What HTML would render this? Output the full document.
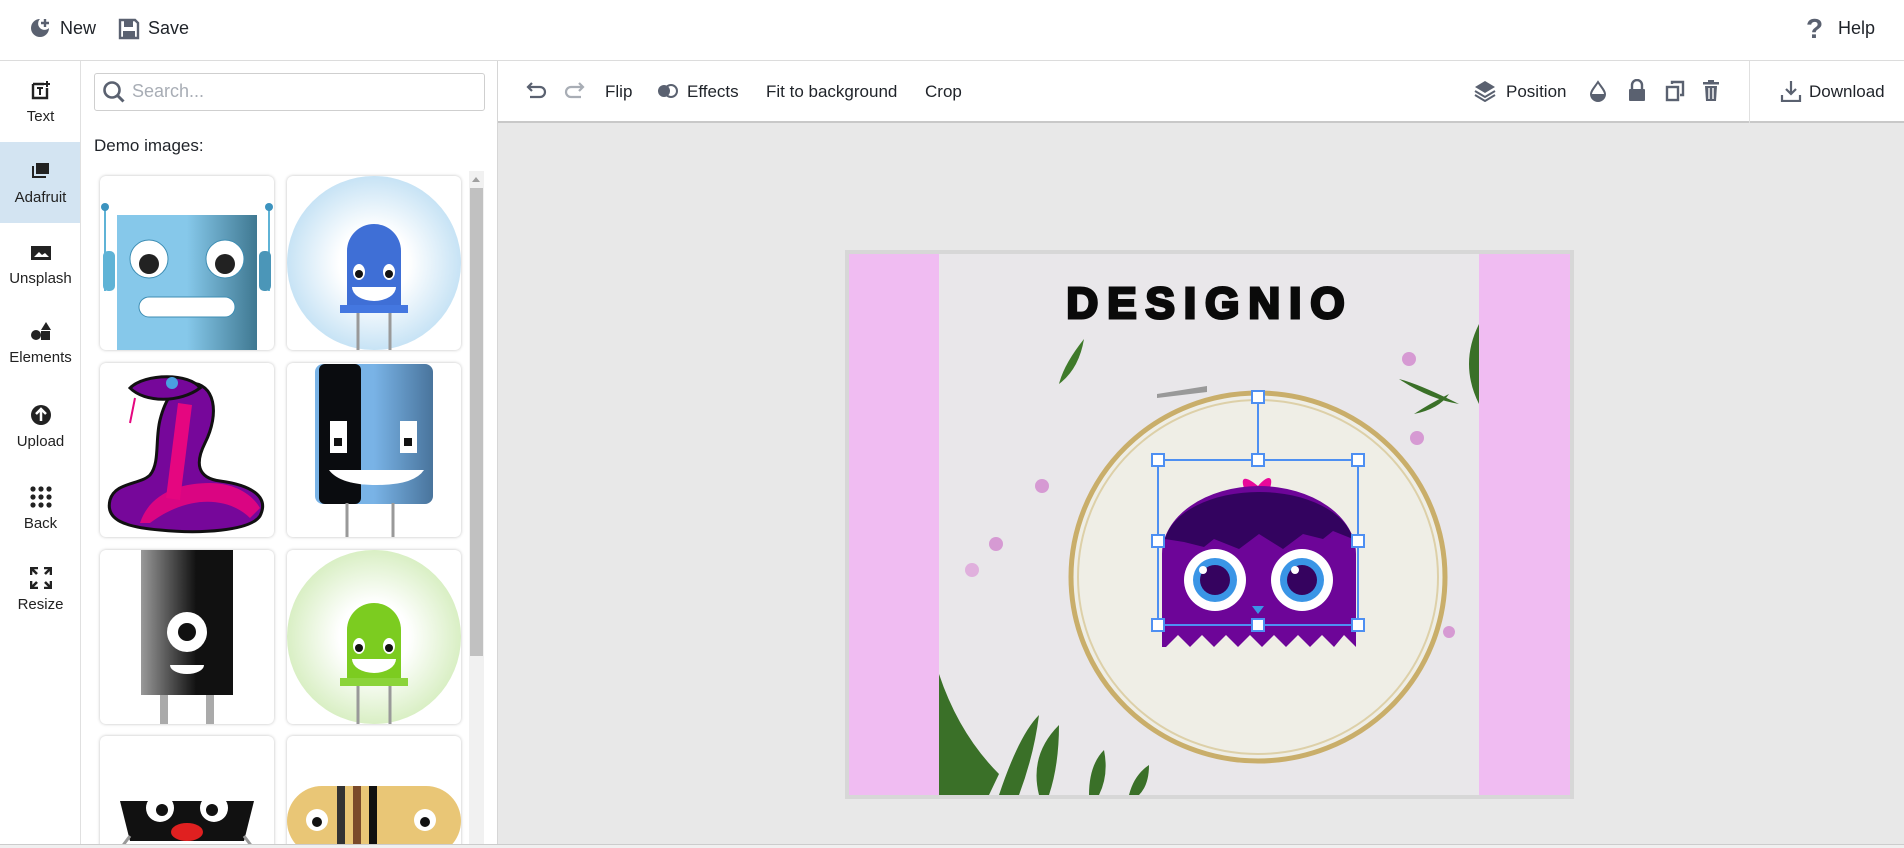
<!DOCTYPE html>
<html><head><meta charset="utf-8"><style>
*{box-sizing:border-box;margin:0;padding:0}
html,body{width:1904px;height:848px;overflow:hidden}
body{background:#fff;font-family:"Liberation Sans",sans-serif;color:#1f2329;position:relative}
.abs{position:absolute}
.top{left:0;top:0;width:1904px;height:61px;border-bottom:1px solid #dcdcdc;background:#fff}
.tt{font-size:18px;top:18px}
.side{left:0;top:61px;width:81px;height:787px;background:#fff;border-right:1px solid #e0e0e0}
.si{width:81px;text-align:center;font-size:15px;color:#222}
.panel{left:81px;top:61px;width:417px;height:787px;background:#fff;border-right:1px solid #d6d6d6}
.clip{left:81px;top:165px;width:385px;height:679px;overflow:hidden}
.card{width:174px;height:174px;background:#fff;border-radius:6px;box-shadow:0 0 3px rgba(0,0,0,.25);overflow:hidden}
.tb{left:498px;top:61px;width:1406px;height:62px;background:#fff;border-bottom:2px solid #c8c8c8}
.tl{font-size:17px;top:82px;color:#1f2329}
.ws{left:498px;top:123px;width:1406px;height:721px;background:#e8e8e8}
</style></head><body>
<div class="abs top"></div>
<svg class="abs" style="left:29px;top:17px" width="22" height="22" viewBox="0 0 22 22"><path d="M11 2A9 9 0 1 0 20 11 6 6 0 0 1 11 2Z" fill="#5a6170"/><path d="M16 2v8M12 6h8" stroke="#5a6170" stroke-width="2.4"/></svg>
<div class="abs tt" style="left:60px">New</div>
<svg class="abs" style="left:118px;top:18px" width="22" height="22" viewBox="0 0 22 22"><path d="M2 2h15l3 3v15H2Z" fill="none" stroke="#5a6170" stroke-width="2.4"/><rect x="6" y="3" width="9" height="6" fill="#5a6170"/><rect x="5" y="13" width="12" height="6" fill="#5a6170"/></svg>
<div class="abs tt" style="left:148px">Save</div>
<div class="abs" style="left:1806px;top:13px;font-size:28px;font-weight:bold;color:#5a6170">?</div>
<div class="abs tt" style="left:1838px">Help</div>

<div class="abs side"></div>
<div class="abs" style="left:0;top:142px;width:80px;height:81px;background:#d3e4f2"></div>
<div class="abs si" style="top:80px"><svg width="20" height="20" viewBox="0 0 20 20"><path d="M2 4h11M2 4v14h14V8" fill="none" stroke="#222" stroke-width="2.4"/><path d="M6 8h6M9 8v7M16 1v6M13 4h6" stroke="#222" stroke-width="2"/></svg><div style="margin-top:4px">Text</div></div>
<div class="abs si" style="top:161px"><svg width="20" height="18" viewBox="0 0 20 18"><rect x="5" y="2" width="13" height="11" fill="#222"/><path d="M2 5v11h13" fill="none" stroke="#222" stroke-width="2"/></svg><div style="margin-top:6px">Adafruit</div></div>
<div class="abs si" style="top:244px"><svg width="22" height="18" viewBox="0 0 22 18"><rect x="1" y="2" width="20" height="14" fill="#222"/><path d="M4 13l5-5 3 3 3-2 4 4Z" fill="#fff"/></svg><div style="margin-top:4px">Unsplash</div></div>
<div class="abs si" style="top:321px"><svg width="22" height="20" viewBox="0 0 22 20"><circle cx="6" cy="14" r="5" fill="#222"/><rect x="11" y="10" width="9" height="9" fill="#222"/><path d="M16 1l5 8h-10Z" fill="#222"/></svg><div style="margin-top:4px">Elements</div></div>
<div class="abs si" style="top:404px"><svg width="22" height="22" viewBox="0 0 22 22"><circle cx="11" cy="11" r="10" fill="#222"/><path d="M11 17V6M6 10l5-5 5 5" fill="none" stroke="#fff" stroke-width="2.5"/></svg><div style="margin-top:3px">Upload</div></div>
<div class="abs si" style="top:486px"><svg width="22" height="22" viewBox="0 0 22 22" fill="#222"><circle cx="3" cy="3" r="2.6"/><circle cx="11" cy="3" r="2.6"/><circle cx="19" cy="3" r="2.6"/><circle cx="3" cy="11" r="2.6"/><circle cx="11" cy="11" r="2.6"/><circle cx="19" cy="11" r="2.6"/><circle cx="3" cy="19" r="2.6"/><circle cx="11" cy="19" r="2.6"/><circle cx="19" cy="19" r="2.6"/></svg><div style="margin-top:3px">Back</div></div>
<div class="abs si" style="top:567px"><svg width="22" height="22" viewBox="0 0 22 22" fill="none" stroke="#222" stroke-width="2.6"><path d="M1 8V1h7M1 1l6 6M21 8V1h-7M21 1l-6 6M1 14v7h7M1 21l6-6M21 14v7h-7M21 21l-6-6"/></svg><div style="margin-top:3px">Resize</div></div>

<div class="abs panel"></div>
<div class="abs" style="left:94px;top:73px;width:391px;height:38px;border:1px solid #cfcfcf;border-radius:3px"></div>
<svg class="abs" style="left:102px;top:80px" width="24" height="24" viewBox="0 0 24 24"><circle cx="10" cy="10" r="7.5" fill="none" stroke="#5a6170" stroke-width="2.6"/><path d="M15.5 15.5l6 6" stroke="#5a6170" stroke-width="3"/></svg>
<div class="abs" style="left:132px;top:81px;font-size:18px;color:#a8adb5">Search...</div>
<div class="abs" style="left:94px;top:136px;font-size:17px">Demo images:</div>
<div class="abs" style="left:469px;top:171px;width:15px;height:673px;background:#f1f1f1"></div>
<div class="abs" style="left:470px;top:188px;width:13px;height:468px;background:#c1c1c1"></div>
<div class="abs" style="left:472px;top:177px;width:0;height:0;border:4px solid transparent;border-bottom:5px solid #a0a0a0;border-top:0"></div>

<div class="abs clip">
<div class="abs card" style="left:19px;top:11px"><svg width="174" height="174"><defs><linearGradient id="g1"><stop offset=".5" stop-color="#86c8ea"/><stop offset="1" stop-color="#3f7891"/></linearGradient></defs><line x1="5" y1="31" x2="5" y2="115" stroke="#5fb3d6" stroke-width="2"/><line x1="169" y1="31" x2="169" y2="115" stroke="#5fb3d6" stroke-width="2"/><circle cx="5" cy="31" r="4" fill="#3c93bf"/><circle cx="169" cy="31" r="4" fill="#3c93bf"/><rect x="3" y="75" width="12" height="40" rx="5" fill="#5fb3d6"/><rect x="159" y="75" width="12" height="40" rx="5" fill="#4b96b8"/><rect x="17" y="39" width="140" height="146" fill="url(#g1)"/><circle cx="49" cy="83" r="19" fill="#fff" stroke="#3d8db3"/><circle cx="49" cy="88" r="10" fill="#222"/><circle cx="125" cy="83" r="19" fill="#fff" stroke="#3d8db3"/><circle cx="125" cy="88" r="10" fill="#222"/><rect x="39" y="121" width="96" height="20" rx="10" fill="#fff" stroke="#3d8db3"/></svg></div>
<div class="abs card" style="left:206px;top:11px"><svg width="174" height="174"><defs><radialGradient id="g2"><stop offset=".4" stop-color="#fff"/><stop offset="1" stop-color="#c7e3f5"/></radialGradient></defs><circle cx="87" cy="87" r="87" fill="url(#g2)"/><path d="M60 75a27 27 0 0 1 54 0v60H60Z" fill="#3f6fd6"/><rect x="53" y="129" width="68" height="8" fill="#4477e0"/><line x1="71" y1="137" x2="71" y2="174" stroke="#999" stroke-width="3"/><line x1="103" y1="137" x2="103" y2="174" stroke="#999" stroke-width="3"/><ellipse cx="72" cy="96" rx="6" ry="8" fill="#fff"/><ellipse cx="102" cy="96" rx="6" ry="8" fill="#fff"/><circle cx="72" cy="98" r="4" fill="#111"/><circle cx="102" cy="98" r="4" fill="#111"/><path d="M65 111h44a22 14 0 0 1-44 0Z" fill="#fff"/></svg></div>
<div class="abs card" style="left:19px;top:198px"><svg width="174" height="174"><path d="M90 20c25 0 30 30 15 60-10 20-8 35 15 38 30 4 50 15 40 35-10 15-60 18-100 14-35-3-55-10-50-30 5-18 30-15 40-25 10-12 5-35 10-55 5-20 15-37 30-37Z" fill="#76079a" stroke="#111" stroke-width="3"/><path d="M40 160c10-30 40-40 70-40 20 0 40 8 50 25l-10 10c-20-20-60-25-100 5Z" fill="#e50680" opacity=".9"/><path d="M78 40l-12 95 14 2 12-95Z" fill="#e50680"/><path d="M30 25c15-15 60-15 70 0-20 15-55 15-70 0Z" fill="#76079a" stroke="#111" stroke-width="3"/><circle cx="72" cy="20" r="6" fill="#4aa0e0"/><path d="M35 35l-5 25" stroke="#e50680" stroke-width="2"/></svg></div>
<div class="abs card" style="left:206px;top:198px"><svg width="174" height="174"><defs><linearGradient id="g3"><stop offset=".5" stop-color="#79b3e6"/><stop offset="1" stop-color="#49749c"/></linearGradient></defs><rect x="28" y="1" width="118" height="140" rx="8" fill="url(#g3)"/><rect x="32" y="1" width="42" height="140" rx="6" fill="#0a0c0f"/><line x1="60" y1="140" x2="60" y2="174" stroke="#999" stroke-width="3"/><line x1="106" y1="140" x2="106" y2="174" stroke="#999" stroke-width="3"/><rect x="43" y="58" width="17" height="32" fill="#fff"/><rect x="47" y="75" width="8" height="8" fill="#111"/><rect x="113" y="58" width="17" height="32" fill="#fff"/><rect x="117" y="75" width="8" height="8" fill="#111"/><path d="M42 107h95q-10 15-47 15t-48-15Z" fill="#fff"/></svg></div>
<div class="abs card" style="left:19px;top:385px"><svg width="174" height="174"><defs><linearGradient id="g4"><stop offset="0" stop-color="#999"/><stop offset=".6" stop-color="#111"/></linearGradient></defs><rect x="41" y="0" width="92" height="145" fill="url(#g4)"/><circle cx="87" cy="82" r="20" fill="#fff"/><circle cx="87" cy="82" r="9" fill="#111"/><path d="M70 115h34a17 9 0 0 1-34 0Z" fill="#fff"/><rect x="60" y="145" width="8" height="29" fill="#aaa"/><rect x="106" y="145" width="8" height="29" fill="#aaa"/></svg></div>
<div class="abs card" style="left:206px;top:385px"><svg width="174" height="174"><defs><radialGradient id="g5"><stop offset=".4" stop-color="#fff"/><stop offset="1" stop-color="#d9efc4"/></radialGradient></defs><circle cx="87" cy="87" r="87" fill="url(#g5)"/><path d="M60 80a27 27 0 0 1 54 0v52H60Z" fill="#7ccc20"/><rect x="53" y="128" width="68" height="8" fill="#8bd43a"/><line x1="71" y1="136" x2="71" y2="174" stroke="#999" stroke-width="3"/><line x1="103" y1="136" x2="103" y2="174" stroke="#999" stroke-width="3"/><ellipse cx="72" cy="96" rx="6" ry="8" fill="#fff"/><ellipse cx="102" cy="96" rx="6" ry="8" fill="#fff"/><circle cx="72" cy="98" r="4" fill="#111"/><circle cx="102" cy="98" r="4" fill="#111"/><path d="M65 109h44a22 14 0 0 1-44 0Z" fill="#fff"/></svg></div>
<div class="abs card" style="left:19px;top:571px"><svg width="174" height="174"><path d="M20 65h134l-10 40H30Z" fill="#111"/><circle cx="60" cy="72" r="14" fill="#fff"/><circle cx="62" cy="74" r="6" fill="#111"/><circle cx="114" cy="72" r="14" fill="#fff"/><circle cx="112" cy="74" r="6" fill="#111"/><ellipse cx="87" cy="96" rx="16" ry="9" fill="#e02020"/><path d="M30 100l-15 20M144 100l15 20" stroke="#999" stroke-width="3"/></svg></div>
<div class="abs card" style="left:206px;top:571px"><svg width="174" height="174"><rect x="0" y="50" width="174" height="70" rx="35" fill="#e9c676"/><rect x="50" y="50" width="8" height="70" fill="#333"/><rect x="66" y="50" width="8" height="70" fill="#7a4a2a"/><rect x="82" y="50" width="8" height="70" fill="#111"/><circle cx="30" cy="84" r="11" fill="#fff"/><circle cx="30" cy="86" r="5" fill="#111"/><circle cx="138" cy="84" r="11" fill="#fff"/><circle cx="138" cy="86" r="5" fill="#111"/></svg></div>
</div>

<div class="abs tb"></div>
<svg class="abs" style="left:526px;top:81px" width="22" height="20" viewBox="0 0 22 20" fill="none" stroke="#5a6170" stroke-width="2.2"><path d="M6 2L2 6l4 4M2 6h12a5 5 0 0 1 0 10H4"/></svg>
<svg class="abs" style="left:563px;top:81px" width="22" height="20" viewBox="0 0 22 20" fill="none" stroke="#a8adb5" stroke-width="2.2"><path d="M16 2l4 4-4 4M20 6H8a5 5 0 0 0 0 10h10"/></svg>
<div class="abs tl" style="left:605px">Flip</div>
<svg class="abs" style="left:657px;top:83px" width="22" height="16" viewBox="0 0 22 16"><circle cx="7" cy="8" r="6" fill="#5a6170"/><circle cx="14" cy="8" r="6" fill="none" stroke="#5a6170" stroke-width="2"/></svg>
<div class="abs tl" style="left:687px">Effects</div>
<div class="abs tl" style="left:766px">Fit to background</div>
<div class="abs tl" style="left:925px">Crop</div>
<svg class="abs" style="left:1474px;top:80px" width="22" height="22" viewBox="0 0 22 22" fill="#5a6170"><path d="M11 1l10 6-10 6L1 7Z"/><path d="M1 11l10 6 10-6M1 15l10 6 10-6" fill="none" stroke="#5a6170" stroke-width="2"/></svg>
<div class="abs tl" style="left:1506px">Position</div>
<svg class="abs" style="left:1589px;top:80px" width="18" height="22" viewBox="0 0 18 22"><path d="M9 2C5 8 2 11 2 14a7 7 0 0 0 14 0c0-3-3-6-7-12Z" fill="none" stroke="#5a6170" stroke-width="2"/><path d="M2 14h14a7 7 0 0 1-14 0Z" fill="#5a6170"/></svg>
<svg class="abs" style="left:1627px;top:79px" width="20" height="22" viewBox="0 0 20 22"><path d="M5 10V6a5 5 0 0 1 10 0v4" fill="none" stroke="#5a6170" stroke-width="2.4"/><rect x="2" y="10" width="16" height="12" rx="1" fill="#5a6170"/></svg>
<svg class="abs" style="left:1665px;top:80px" width="20" height="22" viewBox="0 0 20 22" fill="none" stroke="#5a6170" stroke-width="2.4"><rect x="2" y="7" width="11" height="13"/><path d="M7 4V2h11v13h-3"/></svg>
<svg class="abs" style="left:1702px;top:79px" width="18" height="22" viewBox="0 0 18 22" fill="#5a6170"><rect x="1" y="3" width="16" height="2.5"/><rect x="6" y="1" width="6" height="2"/><path d="M3 7h12l-1 15H4Z"/><path d="M7 9v11M11 9v11" stroke="#fff" stroke-width="1.4"/></svg>
<div class="abs" style="left:1749px;top:61px;width:1px;height:62px;background:#e0e0e0"></div>
<svg class="abs" style="left:1780px;top:80px" width="22" height="22" viewBox="0 0 22 22" fill="none" stroke="#5a6170" stroke-width="2.2"><path d="M11 1v13M6 9l5 5 5-5M2 15v6h18v-6"/></svg>
<div class="abs tl" style="left:1809px">Download</div>

<div class="abs ws"></div>
<div class="abs" style="left:0;top:844px;width:1904px;height:4px;background:#f0f0f0;border-top:1px solid #ccc"></div>
<div class="abs" style="left:845px;top:250px;width:729px;height:549px;background:#d7d7d7"></div>
<div class="abs" style="left:849px;top:254px;width:721px;height:541px;background:#f0bcf2"></div>
<svg class="abs" style="left:939px;top:254px" width="540" height="541" viewBox="0 0 540 541">
<rect width="540" height="541" fill="#e9e7ea"/>
<ellipse cx="319" cy="323" rx="187" ry="184" fill="#efeee6" stroke="#c9ae6a" stroke-width="5"/>
<ellipse cx="319" cy="323" rx="180" ry="177" fill="none" stroke="#ddd0a8" stroke-width="2"/>
<path d="M218 140l50-8v6l-50 6Z" fill="#999"/>
<path d="M120 130q20-15 25-45-20 25-25 45Z" fill="#3f7a2a"/>
<path d="M540 70q-20 40 0 80Z M520 150q-40-20-60-25 30 20 60 25Z M510 140q-20 10-35 20 25-5 35-20Z" fill="#3a7028"/>
<path d="M0 420q20 60 60 100l-10 21H0Z M60 541q20-60 40-80-5 40-20 80Z M100 541q-10-40 20-70 0 40-10 70Z M150 541q0-30 15-45 5 25-5 45Z M190 541q5-20 20-30 0 20-10 30Z" fill="#3a7028"/>
<circle cx="470" cy="105" r="7" fill="#d69ad3"/><circle cx="478" cy="184" r="7" fill="#d69ad3"/><circle cx="103" cy="232" r="7" fill="#d69ad3"/><circle cx="57" cy="290" r="7" fill="#d69ad3"/><circle cx="33" cy="316" r="7" fill="#e0b0dd"/><circle cx="510" cy="378" r="6" fill="#d69ad3"/>
<text x="271" y="64" text-anchor="middle" font-family="Liberation Sans" font-weight="900" font-size="44" letter-spacing="9" fill="#0a0a0a" stroke="#0a0a0a" stroke-width="3">DESIGNIO</text>
<path d="M319 232c-12-10-18-10-14 2 3 5 10 5 14-2Z M319 232c10-12 16-10 12 2-3 5-8 5-12-2Z" fill="#e8089a"/>
<path d="M223 393V300a97 68 0 0 1 194 0v93l-12-12-10 12-12-12-12 12-12-12-12 12-12-12-12 12-12-12-12 12-12-12-12 12-12-12-12 12-12-12-12 12Z" fill="#6d0598"/>
<path d="M226 285a95 55 0 0 1 188 0l-20-8-10 8-20-5-20 15-24-15-20 15-25-10-10 8-20-5Z" fill="#33035f"/>
<circle cx="276" cy="326" r="31" fill="#fff"/><circle cx="276" cy="326" r="22" fill="#3a95e6"/><circle cx="276" cy="326" r="15" fill="#35035f"/><circle cx="264" cy="316" r="4" fill="#fff"/>
<circle cx="363" cy="326" r="31" fill="#fff"/><circle cx="363" cy="326" r="22" fill="#3a95e6"/><circle cx="363" cy="326" r="15" fill="#35035f"/><circle cx="356" cy="316" r="4" fill="#fff"/>
<path d="M313 352h12l-6 8Z" fill="#3a95e6"/>
<path d="M319 143V206M219 206h200v165H219Z" fill="none" stroke="#4e8ff2" stroke-width="2"/>
<g fill="#fff" stroke="#4e8ff2" stroke-width="2"><rect x="313" y="137" width="12" height="12"/><rect x="213" y="200" width="12" height="12"/><rect x="313" y="200" width="12" height="12"/><rect x="413" y="200" width="12" height="12"/><rect x="213" y="281" width="12" height="12"/><rect x="413" y="281" width="12" height="12"/><rect x="213" y="365" width="12" height="12"/><rect x="313" y="365" width="12" height="12"/><rect x="413" y="365" width="12" height="12"/></g>
</svg>
</body></html>
